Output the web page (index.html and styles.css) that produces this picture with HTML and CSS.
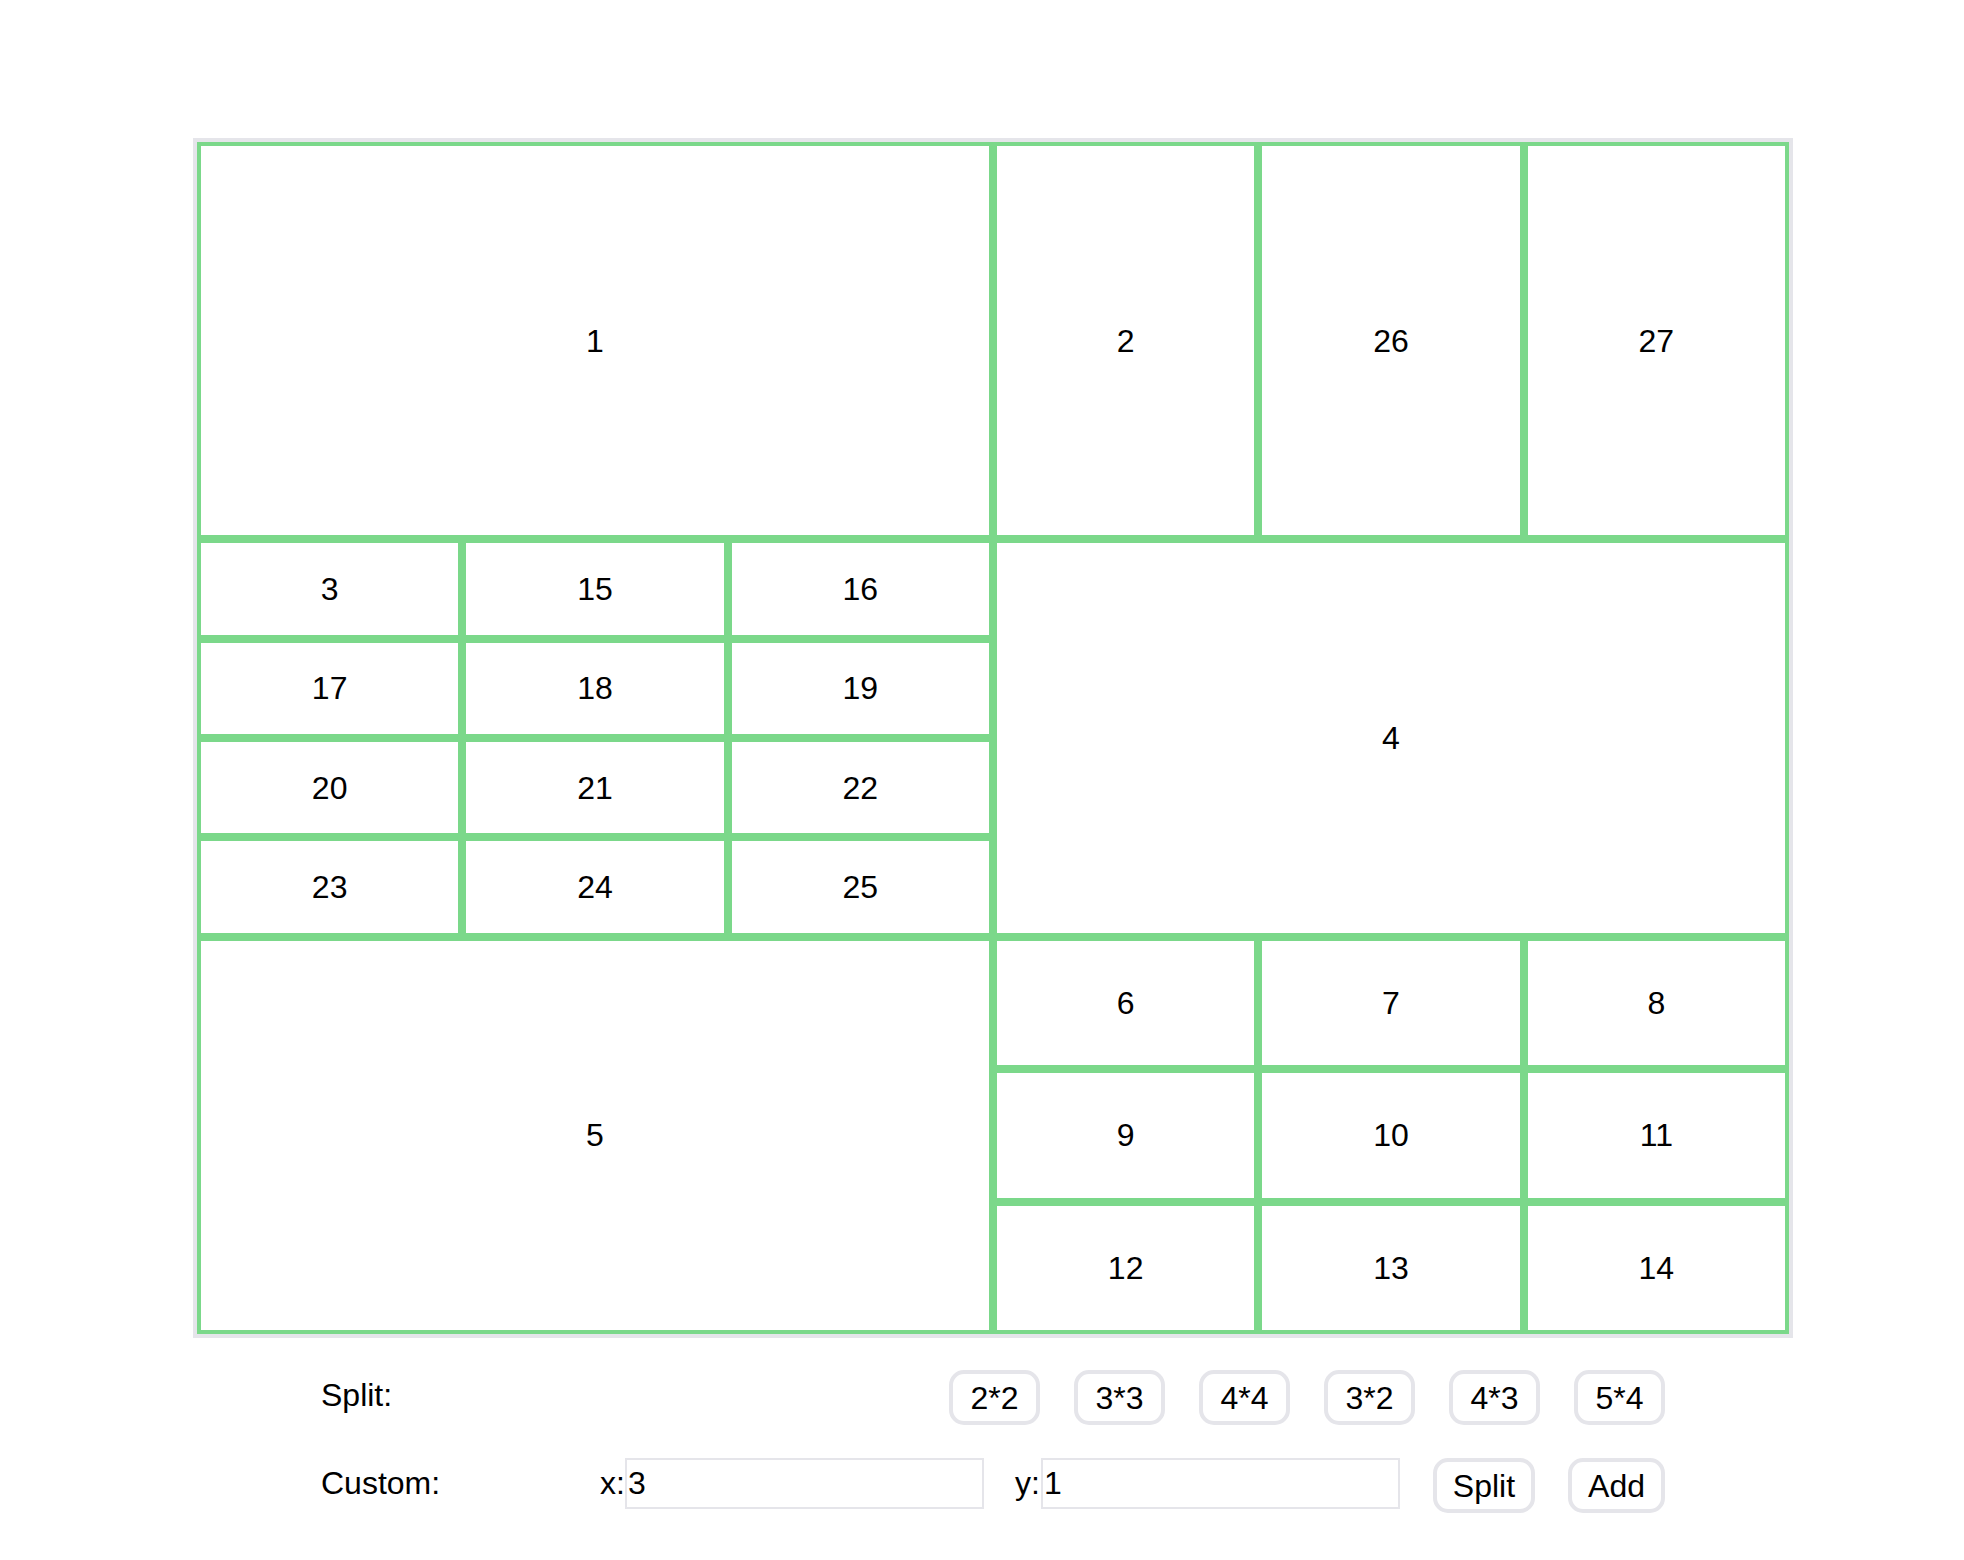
FILE: index.html
```html
<!DOCTYPE html>
<html>
<head>
<meta charset="utf-8">
<link rel="stylesheet" href="styles.css">
</head>
<body>
<div class="app">
  <div class="board">
    <div class="grid main">
      <div class="cell">1</div>
      <div class="grid c3r1">
        <div class="cell">2</div>
        <div class="cell">26</div>
        <div class="cell">27</div>
      </div>
      <div class="grid c3r4">
        <div class="cell">3</div><div class="cell">15</div><div class="cell">16</div>
        <div class="cell">17</div><div class="cell">18</div><div class="cell">19</div>
        <div class="cell">20</div><div class="cell">21</div><div class="cell">22</div>
        <div class="cell">23</div><div class="cell">24</div><div class="cell">25</div>
      </div>
      <div class="cell">4</div>
      <div class="cell">5</div>
      <div class="grid c3r3">
        <div class="cell">6</div><div class="cell">7</div><div class="cell">8</div>
        <div class="cell">9</div><div class="cell">10</div><div class="cell">11</div>
        <div class="cell">12</div><div class="cell">13</div><div class="cell">14</div>
      </div>
    </div>
  </div>
  <div class="controls">
    <div class="row split-row">
      <span class="label">Split:</span>
      <div class="btns presets">
        <button class="btn preset">2*2</button>
        <button class="btn preset">3*3</button>
        <button class="btn preset">4*4</button>
        <button class="btn preset">3*2</button>
        <button class="btn preset">4*3</button>
        <button class="btn preset">5*4</button>
      </div>
    </div>
    <div class="row custom-row">
      <span class="label custom">Custom:</span>
      <span class="axis">x:</span><input class="field" type="text" value="3">
      <span class="axis y">y:</span><input class="field" type="text" value="1">
      <div class="btns">
        <button class="btn">Split</button>
        <button class="btn">Add</button>
      </div>
    </div>
  </div>
</div>
</body>
</html>
```

FILE: styles.css
```css
* { box-sizing: border-box; }
html, body { margin: 0; padding: 0; background: #fff; }
body {
  font-family: "Liberation Sans", Arial, sans-serif;
  font-size: 32px;
  color: #000;
}
.app {
  padding: 138px 0 0 193px;
  width: 1793px;
}
.board {
  width: 1600px;
  height: 1200px;
  border: 4px solid #e5e5ea;
}
.grid {
  display: grid;
  width: 100%;
  height: 100%;
}
.main {
  grid-template-columns: 1fr 1fr;
  grid-template-rows: repeat(3, 1fr);
}
.c3r1 {
  grid-template-columns: repeat(3, 1fr);
  grid-template-rows: 1fr;
}
.c3r4 {
  grid-template-columns: repeat(3, 1fr);
  grid-template-rows: repeat(4, 1fr);
}
.c3r3 {
  grid-template-columns: repeat(3, 1fr);
  grid-template-rows: repeat(3, 1fr);
}
.cell {
  border: 4px solid #7bd88a;
  display: flex;
  align-items: center;
  justify-content: center;
  min-width: 0;
  min-height: 0;
  line-height: 1;
}
.controls {
  padding: 32px 128px 0 128px;
  width: 1600px;
  display: flex;
  flex-direction: column;
  gap: 33px;
}
.row {
  display: flex;
  height: 55px;
}
.split-row {
  align-items: center;
}
.split-row .label {
  position: relative;
  top: -3px;
  line-height: 1;
}
.custom-row {
  align-items: flex-start;
}
.custom-row .label,
.custom-row .axis {
  line-height: 51px;
}
.custom {
  width: 279px;
}
.axis {
  width: 25px;
}
.axis.y {
  margin-left: 31px;
  width: 26px;
}
.field {
  width: 359px;
  height: 51px;
  border: 2px solid #e5e5ea;
  border-radius: 0;
  padding: 0 0 0 1px;
  margin: 0;
  font-family: "Liberation Sans", Arial, sans-serif;
  font-size: 32px;
  color: #000;
  background: #fff;
  outline: none;
}
.btns {
  margin-left: auto;
  display: flex;
  gap: 33px;
  align-items: center;
}
.presets {
  gap: 34px;
}
.btn {
  height: 55px;
  padding: 0 16px;
  border: 4px solid #e5e5ea;
  border-radius: 15px;
  background: #fff;
  font-family: "Liberation Sans", Arial, sans-serif;
  font-size: 32px;
  color: #000;
  line-height: 1;
  margin: 0;
}
.preset {
  width: 91px;
  padding: 0;
}
```
